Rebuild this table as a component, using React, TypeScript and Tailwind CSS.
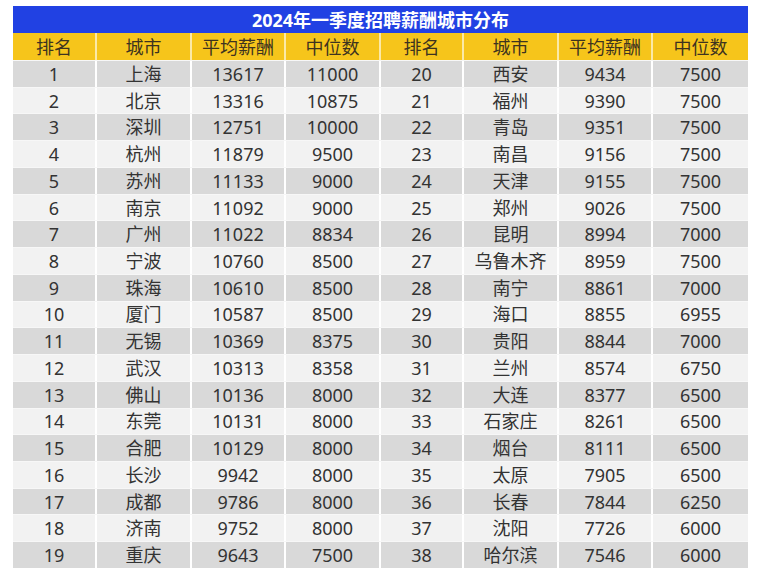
import React from "react";

const left: [number, string, number, number][] = [
  [1, "上海", 13617, 11000],
  [2, "北京", 13316, 10875],
  [3, "深圳", 12751, 10000],
  [4, "杭州", 11879, 9500],
  [5, "苏州", 11133, 9000],
  [6, "南京", 11092, 9000],
  [7, "广州", 11022, 8834],
  [8, "宁波", 10760, 8500],
  [9, "珠海", 10610, 8500],
  [10, "厦门", 10587, 8500],
  [11, "无锡", 10369, 8375],
  [12, "武汉", 10313, 8358],
  [13, "佛山", 10136, 8000],
  [14, "东莞", 10131, 8000],
  [15, "合肥", 10129, 8000],
  [16, "长沙", 9942, 8000],
  [17, "成都", 9786, 8000],
  [18, "济南", 9752, 8000],
  [19, "重庆", 9643, 7500],
];
const right: [number, string, number, number][] = [
  [20, "西安", 9434, 7500],
  [21, "福州", 9390, 7500],
  [22, "青岛", 9351, 7500],
  [23, "南昌", 9156, 7500],
  [24, "天津", 9155, 7500],
  [25, "郑州", 9026, 7500],
  [26, "昆明", 8994, 7000],
  [27, "乌鲁木齐", 8959, 7500],
  [28, "南宁", 8861, 7000],
  [29, "海口", 8855, 6955],
  [30, "贵阳", 8844, 7000],
  [31, "兰州", 8574, 6750],
  [32, "大连", 8377, 6500],
  [33, "石家庄", 8261, 6500],
  [34, "烟台", 8111, 6500],
  [35, "太原", 7905, 6500],
  [36, "长春", 7844, 6250],
  [37, "沈阳", 7726, 6000],
  [38, "哈尔滨", 7546, 6000],
];

const headers = ["排名", "城市", "平均薪酬", "中位数", "排名", "城市", "平均薪酬", "中位数"];
const cols = "grid grid-cols-[84px_95px_94px_95px_83px_95px_94px_95px]";

export default function App() {
  return (
    <div
      className="w-[776px] h-[584px] bg-white pt-[6px] pl-[13px]"
      style={{ fontFamily: '"Noto Sans", "Noto Sans CJK SC", sans-serif' }}
    >
      <div className="w-[735px]">
        <div className="h-[27px] bg-[#2141e3] flex items-center justify-center text-white font-bold text-[18px] leading-none">
          2024年一季度招聘薪酬城市分布
        </div>
        <div className={`${cols} h-[27px] bg-[#f6c51b]`}>
          {headers.map((h, i) => (
            <div
              key={i}
              className={`flex items-center justify-center text-[18px] leading-none text-[#3d3320] ${
                i < 7 ? "border-r-2 border-[#fbe9a6]" : ""
              }`}
            >
              {h}
            </div>
          ))}
        </div>
        {left.map((l, idx) => {
          const r = right[idx];
          const vals = [l[0], l[1], l[2], l[3], r[0], r[1], r[2], r[3]];
          const bg = idx % 2 === 0 ? "bg-[#d9d9d9]" : "bg-[#f2f2f2]";
          return (
            <div key={idx} className={`${cols} h-[26.74px] ${bg} border-t border-[#f7f7f7]`}>
              {vals.map((v, i) => (
                <div
                  key={i}
                  className={`flex items-center justify-center text-[18px] leading-none text-[#333333] ${
                    i < 7 ? "border-r-2 border-white" : ""
                  }`}
                >
                  {v}
                </div>
              ))}
            </div>
          );
        })}
      </div>
    </div>
  );
}
